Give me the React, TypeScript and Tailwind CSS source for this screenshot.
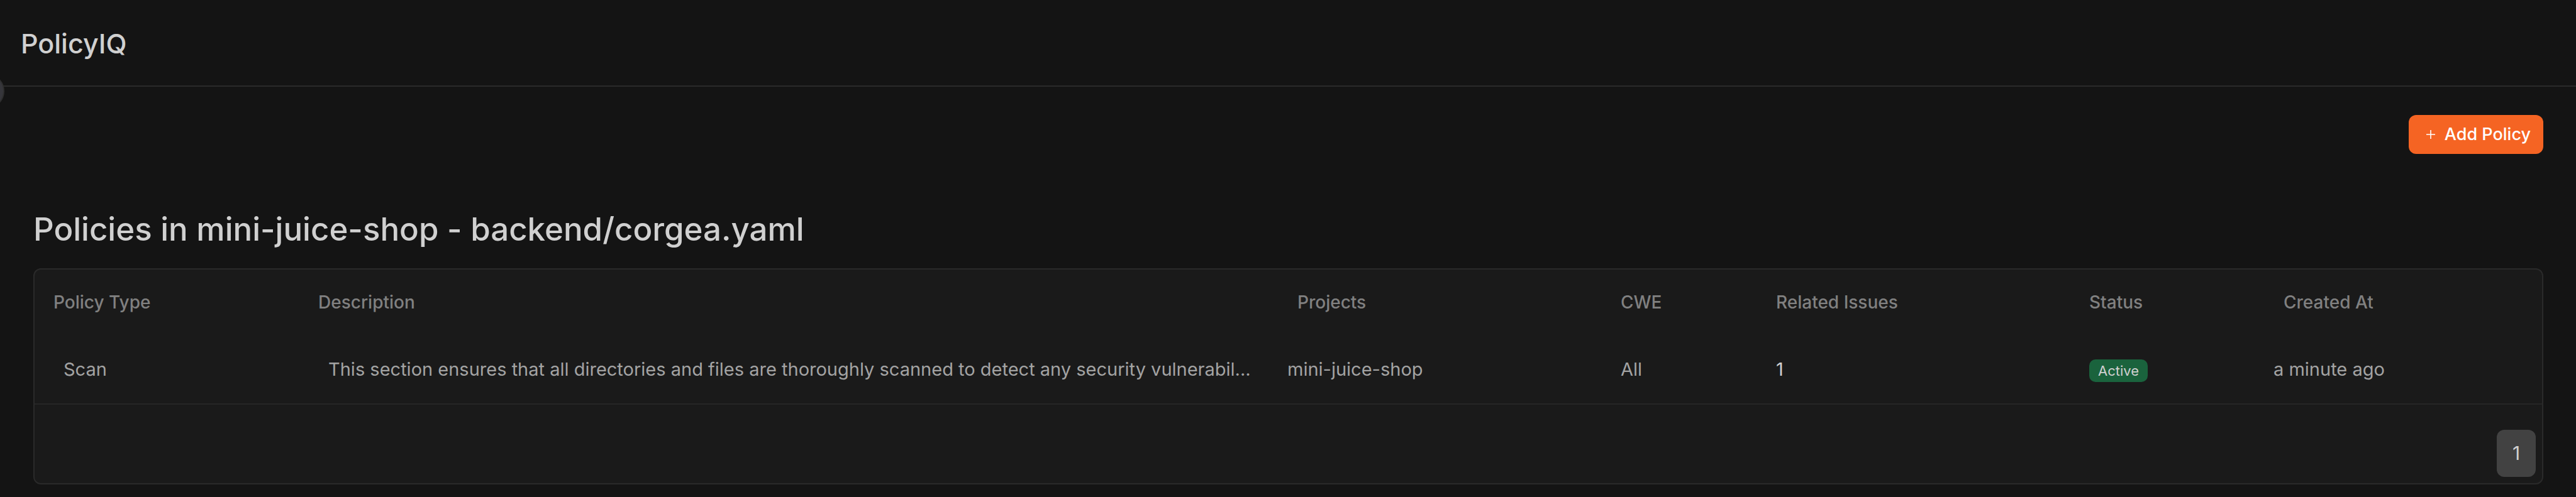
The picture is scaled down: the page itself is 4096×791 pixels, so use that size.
import React from "react";

const columns = [
  { label: "Policy Type", col: "w-[421px]" },
  { label: "Description", col: "w-[1557px]" },
  { label: "Projects", col: "w-[514px]" },
  { label: "CWE", col: "w-[247px]" },
  { label: "Related Issues", col: "w-[498px]" },
  { label: "Status", col: "w-[309px]" },
  { label: "Created At", col: "w-[442px]" },
];

function Header() {
  return (
    <header className="relative h-[138px] border-b-2 border-[#2a2a2a] px-[33px] pt-[41px]">
      <h1 className="text-[43px] leading-[56px] font-medium text-[#d0d0d0]">PolicyIQ</h1>
      <button
        type="button"
        aria-label="Toggle sidebar"
        className="absolute top-[117px] -left-[49px] size-14 rounded-full border-2 border-[#2f2f2f] bg-[#36363b]"
      />
    </header>
  );
}

function PolicyTable() {
  return (
    <section className="overflow-hidden rounded-xl border-2 border-[#2a2a2a] bg-[#1a1a1a]">
      <table className="w-full table-fixed border-collapse text-left text-[29px] leading-[36px]">
        <colgroup>
          {columns.map((c) => (
            <col key={c.label} className={c.col} />
          ))}
        </colgroup>
        <thead>
          <tr className="h-[104px] text-[28px] text-[#808080]">
            {columns.map((c) => (
              <th key={c.label} scope="col" className="pl-[30px] font-medium">
                {c.label}
              </th>
            ))}
          </tr>
        </thead>
        <tbody>
          <tr className="h-[110px] border-b-2 border-[#262626] text-[#a3a3a3]">
            <td className="pl-[46px]">Scan</td>
            <td className="truncate pl-[46px]">
              This section ensures that all directories and files are thoroughly scanned to detect any
              security vulnerabil...
            </td>
            <td className="pl-[14px]">mini-juice-shop</td>
            <td className="pl-[30px]">All</td>
            <td className="pl-[30px] text-[#d0d0d0]">1</td>
            <td className="pl-[30px]">
              <span className="mt-1 flex h-9 w-fit items-center rounded-[10px] bg-[#1a633d] px-[14px] text-[22px] text-[#d0d0d0]">
                Active
              </span>
            </td>
            <td className="pl-[14px]">a minute ago</td>
          </tr>
        </tbody>
      </table>
      <nav aria-label="Pagination" className="flex justify-end px-[10px] pt-10 pb-[10px]">
        <button
          type="button"
          aria-current="page"
          className="h-[75px] w-[62px] rounded-xl bg-[#424242] text-[30px] text-[#d0d0d0]"
        >
          1
        </button>
      </nav>
    </section>
  );
}

export default function App() {
  return (
    <div className="min-h-screen overflow-hidden bg-[#141414] font-['Inter',sans-serif]">
      <Header />
      <main className="pt-[45px] pr-[52px] pl-[53px]">
        <div className="flex justify-end">
          <button
            type="button"
            className="flex h-[62px] items-center gap-[15px] rounded-xl bg-[#f56423] pr-5 pl-7 text-[27px] font-medium text-white"
          >
            <svg viewBox="0 0 14 14" className="size-[14px]" fill="none" stroke="currentColor" strokeWidth="1.6">
              <path d="M7 0v14M0 7h14" />
            </svg>
            Add Policy
          </button>
        </div>
        <h2 className="mt-[86px] mb-7 text-[51px] leading-[68px] font-medium text-[#d0d0d0]">
          Policies in mini-juice-shop - backend/corgea.yaml
        </h2>
        <PolicyTable />
      </main>
    </div>
  );
}
